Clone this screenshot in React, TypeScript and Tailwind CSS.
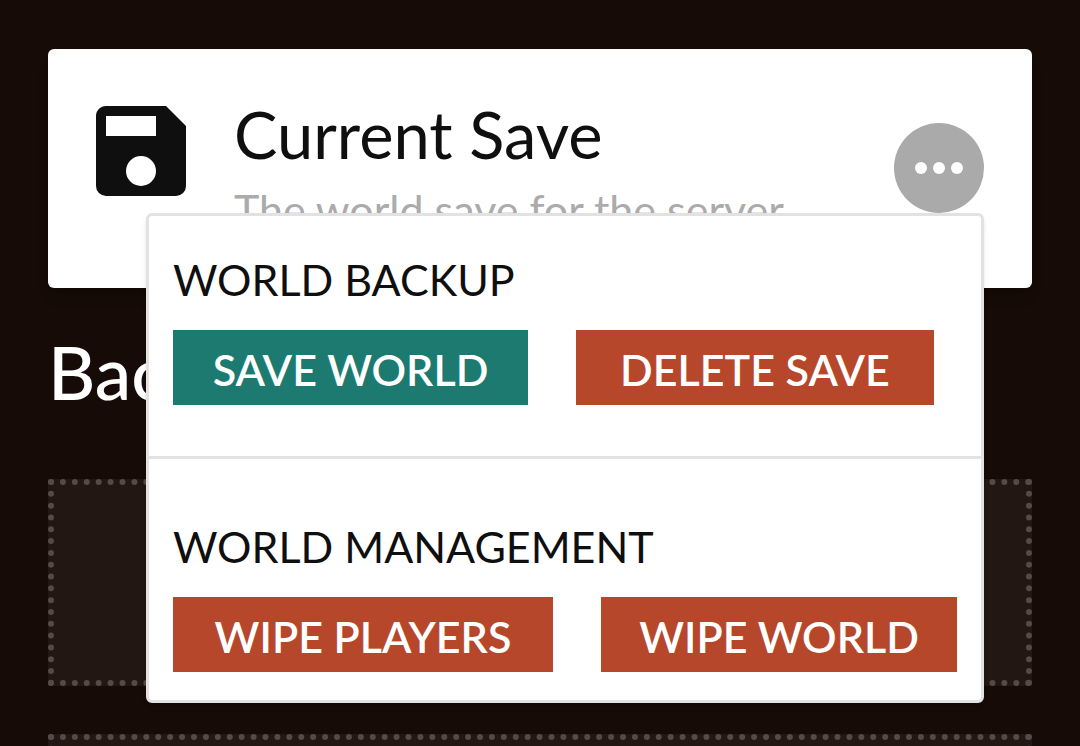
import { ReactNode } from "react";

function SaveIcon() {
  return (
    <svg viewBox="3 3 18 18" className="size-[90px] shrink-0" fill="currentColor" aria-hidden="true">
      <path d="M15,9H5V5H15M12,19A3,3 0 0,1 9,16A3,3 0 0,1 12,13A3,3 0 0,1 15,16A3,3 0 0,1 12,19M17,3H5C3.89,3 3,3.9 3,5V19A2,2 0 0,0 5,21H19A2,2 0 0,0 21,19V7L17,3Z" />
    </svg>
  );
}

function DotsIcon() {
  return (
    <svg viewBox="0 0 48 12" className="h-3 w-12" fill="currentColor" aria-hidden="true">
      <circle cx="6" cy="6" r="6" />
      <circle cx="24" cy="6" r="6" />
      <circle cx="42" cy="6" r="6" />
    </svg>
  );
}

function ActionButton({ className, children }: { className: string; children: ReactNode }) {
  return (
    <button
      type="button"
      className={`flex h-[75px] items-center justify-center pt-1 text-[43px] leading-[60px] font-semibold whitespace-nowrap text-white ${className}`}
    >
      {children}
    </button>
  );
}

function ActionMenu() {
  return (
    <div className="absolute top-full right-0 z-10 w-max rounded-md border-3 border-[#e2e2e2] bg-white shadow-md">
      <section className="px-6 pt-[34px] pb-[51px]">
        <h3 className="text-[43px] leading-[60px]">WORLD BACKUP</h3>
        <div className="mt-5 flex gap-12">
          <ActionButton className="w-[355px] bg-[#1c7a70]">SAVE WORLD</ActionButton>
          <ActionButton className="w-[358px] bg-[#b7472b]">DELETE SAVE</ActionButton>
        </div>
      </section>
      <section className="border-t-3 border-[#e2e2e2] px-6 pt-[58px] pb-7">
        <h3 className="text-[43px] leading-[60px]">WORLD MANAGEMENT</h3>
        <div className="mt-5 flex gap-12">
          <ActionButton className="w-[380px] bg-[#b7472b]">WIPE PLAYERS</ActionButton>
          <ActionButton className="w-[356px] bg-[#b7472b]">WIPE WORLD</ActionButton>
        </div>
      </section>
    </div>
  );
}

function BackupSlot() {
  return <li className="h-[207px] border-6 border-dotted border-[#564a46] bg-[#221713]" />;
}

export default function App() {
  return (
    <main className="h-screen overflow-hidden bg-[#160b06] px-12 pt-[49px] font-['Lato',sans-serif] text-[#0f0f0f]">
      <section className="flex items-start rounded-md bg-white px-12 pt-11 pb-12 shadow-lg">
        <div className="flex flex-1 gap-12">
          <div className="pt-[13px]">
            <SaveIcon />
          </div>
          <div className="h-[147px] flex-1">
            <h1 className="text-[65px] leading-[82px]">Current Save</h1>
            <p className="mt-2 text-[43px] leading-[54px] text-[#ababab]">The world save for the server</p>
          </div>
        </div>
        <div className="relative mt-[30px]">
          <button
            type="button"
            aria-label="Save actions"
            aria-expanded="true"
            className="flex size-[90px] items-center justify-center rounded-full bg-[#aaaaaa] text-white"
          >
            <DotsIcon />
          </button>
          <ActionMenu />
        </div>
      </section>
      <h2 className="mt-10 text-[73px] leading-[88px] font-medium text-white">Backups</h2>
      <ul className="mt-[63px] flex flex-col gap-12">
        <BackupSlot />
        <BackupSlot />
      </ul>
    </main>
  );
}
